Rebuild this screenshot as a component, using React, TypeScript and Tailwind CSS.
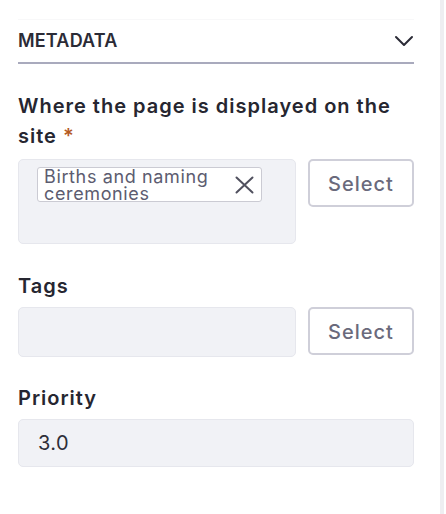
const font = "font-['Inter','Noto_Sans',sans-serif]"

function SelectButton() {
  return (
    <button className="h-[48px] w-[106px] shrink-0 rounded-[5px] border-2 border-[#cfcfd9] bg-white pt-[2px] text-[20px] font-medium tracking-[0.05em] text-[#6a6a7c]">
      Select
    </button>
  )
}

export default function App() {
  return (
    <div className={`flex h-[514px] w-[446px] bg-white ${font} text-[#262630]`}>
      <div className="w-[440px] px-[18px] pt-[19px]">
        {/* section header */}
        <div className="w-[396px] border-t border-[#f8f8f9]">
          <div className="flex items-center justify-between border-b-2 border-[#a9aabd] pb-[8px] pt-[7px]">
            <h2 className="text-[18px] font-semibold leading-[27px] tracking-[0.01em] text-[#2b2b36]">METADATA</h2>
            <svg width="20" height="12" viewBox="0 0 20 12">
              <path d="M2 2 L10 10 L18 2" fill="none" stroke="#2b2b36" strokeWidth="2" strokeLinecap="round" strokeLinejoin="round" />
            </svg>
          </div>
        </div>

        {/* where displayed */}
        <label className="mt-[27px] block text-[20px] font-semibold leading-[30px] tracking-[0.05em]">
          Where the page is displayed on the site <span className="text-[#b55a1f]">*</span>
        </label>
        <div className="mt-[8px] flex gap-[12px]">
          <div className="h-[85px] w-[278px] rounded-[5px] border border-[#e6e7ed] bg-[#f1f2f6] pl-[18px] pt-[7px]">
            <div className="flex h-[35px] w-[225px] rounded-[3px] border border-[#cbcbd3] bg-white pl-[6px] pr-[7px]">
              <span className="flex-1 text-[18px] leading-[17px] tracking-[0.035em] text-[#5c5c70]">Births and naming ceremonies</span>
              <svg width="19" height="18" viewBox="0 0 19 18" className="mt-[8px] shrink-0">
                <path d="M1.5 1.5 L17.5 16.5 M17.5 1.5 L1.5 16.5" stroke="#50505e" strokeWidth="2" strokeLinecap="round" />
              </svg>
            </div>
          </div>
          <SelectButton />
        </div>

        {/* tags */}
        <label className="mt-[27px] block text-[20px] font-semibold leading-[30px] tracking-[0.05em]">Tags</label>
        <div className="mt-[6px] flex gap-[12px]">
          <div className="h-[50px] w-[278px] rounded-[5px] border border-[#e6e7ed] bg-[#f1f2f6]" />
          <SelectButton />
        </div>

        {/* priority */}
        <label className="mt-[26px] block text-[20px] font-semibold leading-[30px] tracking-[0.05em]">Priority</label>
        <div className="mt-[6px] flex h-[48px] w-[396px] items-center rounded-[5px] border border-[#e6e7ed] bg-[#f1f2f6] pl-[19px] text-[20px] tracking-[0.02em] text-[#2e2e38]">
          3.0
        </div>
      </div>
      <div className="h-full w-[4px] bg-[#eeeef1]" />
    </div>
  )
}
